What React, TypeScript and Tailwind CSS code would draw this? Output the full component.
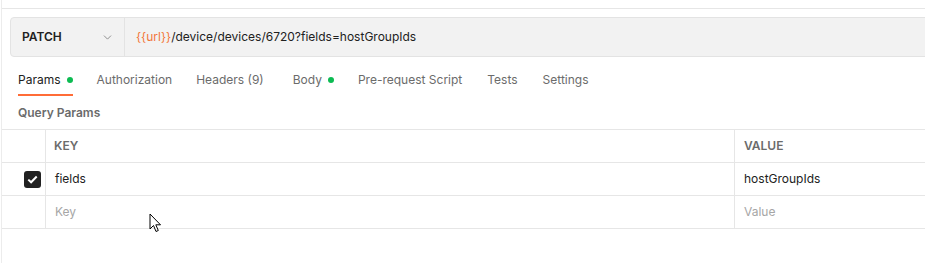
import { ChevronDown } from "lucide-react";

const tabs = [
  { label: "Params", dot: true, active: true, pad: "" },
  { label: "Authorization", pad: "" },
  { label: "Headers (9)", pad: "pr-[5px]" },
  { label: "Body", dot: true, pad: "" },
  { label: "Pre-request Script", pad: "pr-[1px]" },
  { label: "Tests", pad: "pr-[1px]" },
  { label: "Settings", pad: "" },
];

const rows = [
  { key: "fields", value: "hostGroupIds", checked: true },
  { key: "", value: "", checked: false },
];

const Cursor = () => (
  <svg
    className="absolute left-[149px] top-[213px]"
    width="14"
    height="21"
    viewBox="0 0 14 21"
  >
    <path
      d="M1 1 L1 16 L4.5 12.5 L7 18.5 L9.3 17.5 L6.8 11.8 L11.5 11.8 Z"
      fill="#fff"
      stroke="#000"
      strokeWidth="1"
      strokeLinejoin="round"
    />
  </svg>
);

export default function App() {
  return (
    <div className="relative w-[925px] h-[263px] overflow-hidden bg-white font-['Inter',sans-serif]">
      <div className="ml-px h-full border-l border-[#ececec]">
        <div className="h-[9px] border-b border-[#e6e6e6]" />

        {/* request bar */}
        <div className="mt-[8px] ml-[8px] mr-[-20px] flex h-[40px] rounded-[4px] border border-[#e3e3e3] bg-[#f2f2f2]">
          <div className="flex w-[114px] items-center justify-between border-r border-[#e3e3e3] pl-[11px] pr-[10px]">
            <span className="text-[12px] font-semibold text-[#212121]">PATCH</span>
            <ChevronDown size={13} strokeWidth={1.5} className="text-[#7a7a7a]" />
          </div>
          <div className="flex items-center pl-[11px] text-[12px] text-[#212121]">
            <span className="text-[#f2763a]">{"{{url}}"}</span>
            <span>/device/devices/6720?fields=hostGroupIds</span>
          </div>
        </div>

        {/* tabs */}
        <div className="mt-[15px] flex gap-[24px] pl-[16px]">
          {tabs.map((tab) => (
            <div
              key={tab.label}
              className={`flex items-center gap-[6px] pb-[6px] border-b-2 text-[12px] leading-[16px] ${
                tab.active ? "border-[#ff6c37] text-[#212121]" : "border-transparent text-[#6b6b6b]"
              } ${tab.pad}`}
            >
              <span>{tab.label}</span>
              {tab.dot && <span className="h-[6px] w-[6px] rounded-full bg-[#0cbb52]" />}
            </div>
          ))}
        </div>

        <div className="mt-[9px] pl-[16px] text-[12px] font-semibold leading-[16px] text-[#6b6b6b]">
          Query Params
        </div>

        {/* table */}
        <div className="mt-[8px] mr-[-20px] border-t border-[#e6e6e6] text-[12px]">
          <div className="flex h-[33px] border-b border-[#e6e6e6]">
            <div className="w-[44px] border-r border-[#e6e6e6]" />
            <div className="flex w-[689px] items-center border-r border-[#e6e6e6] pl-[8px] font-semibold text-[#6b6b6b]">
              KEY
            </div>
            <div className="flex flex-1 items-center pl-[9px] font-semibold text-[#6b6b6b]">VALUE</div>
          </div>
          {rows.map((row, i) => (
            <div key={i} className="flex h-[33px] border-b border-[#e6e6e6]">
              <div className="flex w-[44px] items-center justify-end border-r border-[#e6e6e6] pr-[4px]">
                {row.checked && (
                  <span className="flex h-[17px] w-[17px] items-center justify-center rounded-[3px] bg-[#212121]">
                    <svg width="11" height="9" viewBox="0 0 11 9">
                      <path d="M1.3 4.6 L4.1 7.3 L9.7 1.5" fill="none" stroke="#fff" strokeWidth="2" />
                    </svg>
                  </span>
                )}
              </div>
              <div
                className={`flex w-[689px] items-center border-r border-[#e6e6e6] pl-[9px] ${
                  row.key ? "text-[#212121]" : "text-[#a6a6a6]"
                }`}
              >
                {row.key || "Key"}
              </div>
              <div
                className={`flex flex-1 items-center pl-[9px] ${
                  row.value ? "text-[#212121]" : "text-[#a6a6a6]"
                }`}
              >
                {row.value || "Value"}
              </div>
            </div>
          ))}
        </div>
      </div>
      <Cursor />
    </div>
  );
}
